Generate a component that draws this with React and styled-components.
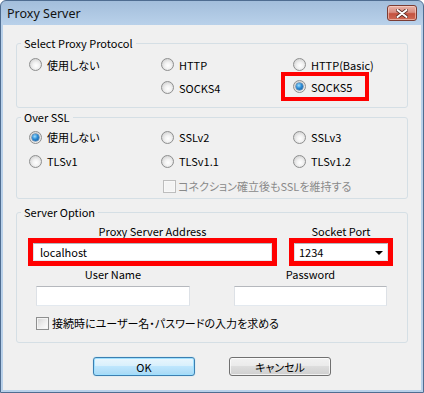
import React from "react";
import styled, { createGlobalStyle } from "styled-components";

const Global = createGlobalStyle`
  html, body { margin: 0; padding: 0; background: #ffffff; }
  body {
    font-family: "Noto Sans CJK JP", "Noto Sans", sans-serif;
    font-size: 11px;
    color: #000;
    font-feature-settings: "palt";
  }
  * { box-sizing: border-box; }
`;

const Window = styled.div`
  width: 424px;
  height: 393px;
  border: 1px solid #4f6d91;
  border-radius: 6px 6px 0 0;
  background: linear-gradient(#a3bedb 0px, #b9d1ea 24px, #b9d1ea 100%);
  padding: 0 2px 2px;
  display: flex;
  flex-direction: column;
`;

const TitleBar = styled.div`
  height: 24px;
  flex: none;
  display: flex;
  align-items: center;
  justify-content: space-between;
  padding: 0 4px 0 4px;
`;

const Title = styled.span`
  font-family: "Noto Sans", "Open Sans", sans-serif;
  font-size: 12.5px;
  color: #111;
  font-feature-settings: normal;
`;

const CloseButton = styled.div`
  width: 30px;
  height: 16px;
  border: 1px solid #7b3c33;
  border-radius: 3px;
  background: linear-gradient(#e9b2a7 0%, #d98d80 45%, #c4523f 55%, #cf6a55 100%);
  box-shadow: inset 0 0 0 1px rgba(255, 220, 210, 0.55);
  display: flex;
  align-items: center;
  justify-content: center;
`;

const Client = styled.div`
  flex: 1;
  background: #f0f0f0;
  padding: 11px 13px 0 13px;
  display: flex;
  flex-direction: column;
`;

const Group = styled.fieldset`
  margin: ${(p) => p.$mt || 0}px 0 0;
  padding: ${(p) => p.$pad};
  border: 1px solid #d5dfe5;
  border-radius: 3px;
  min-width: 0;
`;

const Legend = styled.legend`
  margin-left: 4px;
  padding: 0 3px;
  line-height: 14px;
  height: 14px;
`;

const OptionGrid = styled.div`
  display: grid;
  grid-template-columns: repeat(3, 132px);
  grid-auto-rows: ${(p) => p.$row}px;
  padding-left: 12px;
`;

const Option = styled.label`
  display: flex;
  align-items: center;
  gap: ${(p) => p.$gap ?? 5}px;
  white-space: nowrap;
  grid-column: ${(p) => p.$col || "auto"};
  margin-top: ${(p) => p.$mt || 0}px;
  margin-left: ${(p) => p.$ml || 0}px;
  color: ${(p) => (p.$disabled ? "#8a8a8a" : "#000")};
`;

const RadioDot = styled.span`
  position: relative;
  flex: none;
  width: 13px;
  height: 13px;
  border-radius: 50%;
  border: 1px solid #8e8f8f;
  background: radial-gradient(circle at 55% 60%, #ffffff 0%, #f2f2f2 35%, #d6d6d6 75%, #c9c9c9 100%);
  &::after {
    content: "";
    display: ${(p) => (p.$checked ? "block" : "none")};
    position: absolute;
    left: 2px;
    top: 2px;
    width: 7px;
    height: 7px;
    border-radius: 50%;
    background: radial-gradient(circle at 40% 35%, #9fe0ff 0%, #2b8ad4 45%, #0d4f8f 100%);
    box-shadow: 0 0 0 0.5px #2f5f8c;
  }
`;

const CheckBox = styled.span`
  flex: none;
  width: 13px;
  height: 13px;
  border: 1px solid ${(p) => (p.$disabled ? "#bdbdbd" : "#8e8f8f")};
  background: ${(p) =>
    p.$disabled
      ? "#f4f4f4"
      : "linear-gradient(135deg, #d2d2d2 0%, #ececec 50%, #ffffff 100%)"};
  box-shadow: inset 0 0 0 1px ${(p) => (p.$disabled ? "#f8f8f8" : "#f4f4f4")};
`;

const Highlight = styled.div`
  width: ${(p) => p.$w}px;
  height: ${(p) => p.$h}px;
  margin: -4px 0 -2px -12px;
  border: 4px solid #ff0000;
  padding-left: 8px;
  display: flex;
  align-items: center;
`;

const FieldRow = styled.div`
  display: flex;
  gap: ${(p) => p.$gap}px;
  padding-left: ${(p) => p.$pl}px;
  margin-top: ${(p) => p.$mt || 0}px;
`;

const Field = styled.div`
  width: ${(p) => p.$w}px;
  display: flex;
  flex-direction: column;
  align-items: stretch;
`;

const FieldLabel = styled.div`
  text-align: center;
  line-height: 13px;
  height: 13px;
  margin-bottom: ${(p) => p.$mb || 0}px;
  white-space: nowrap;
`;

const RedFrame = styled.div`
  height: 28px;
  border: 5px solid #ff0000;
  display: flex;
`;

const TextBox = styled.div`
  flex: 1 1 auto;
  height: ${(p) => p.$h || 18}px;
  background: #fff;
  border: 1px solid;
  border-color: #b5b8bd #dde1e6 #e3e9ef #dde1e6;
  padding-left: ${(p) => p.$pl || 4}px;
  padding-right: 4px;
  display: flex;
  align-items: center;
  justify-content: space-between;
  line-height: 14px;
`;

const Arrow = styled.span`
  width: 0;
  height: 0;
  border-left: 4px solid transparent;
  border-right: 4px solid transparent;
  border-top: 4px solid #000;
  margin-top: 1px;
`;

const CheckRow = styled.label`
  display: flex;
  align-items: center;
  gap: 3px;
  height: 14px;
  margin-top: 10px;
  padding-left: 19px;
  white-space: nowrap;
`;

const ButtonRow = styled.div`
  display: flex;
  justify-content: center;
  gap: 34px;
  margin-top: 14px;
`;

const Button = styled.div`
  width: 102px;
  height: 19px;
  border-radius: 3px;
  border: 1px solid ${(p) => (p.$default ? "#3c7fb1" : "#707070")};
  background: ${(p) =>
    p.$default
      ? "linear-gradient(#eaf6fd 0%, #d9f0fc 45%, #bee6fd 50%, #a7d9f5 100%)"
      : "linear-gradient(#f2f2f2 0%, #ebebeb 45%, #dddddd 50%, #cfcfcf 100%)"};
  box-shadow: ${(p) =>
    p.$default
      ? "inset 0 0 0 1px #9ee0ff, 0 0 1px #6cc6f0"
      : "inset 0 0 0 1px rgba(255,255,255,0.7)"};
  display: flex;
  align-items: center;
  justify-content: center;
  line-height: 14px;
`;

function Radio({ label, checked, col, mt }) {
  return (
    <Option $col={col} $mt={mt}>
      <RadioDot $checked={checked} />
      {label}
    </Option>
  );
}

export default function App() {
  return (
    <>
      <Global />
      <Window>
        <TitleBar>
          <Title>Proxy Server</Title>
          <CloseButton>
            <svg width="12" height="9" viewBox="0 0 12 9">
              <path d="M1.5 1 L10.5 8 M10.5 1 L1.5 8" stroke="#5a2a22" strokeWidth="3.6" strokeLinecap="round" fill="none" />
              <path d="M1.5 1 L10.5 8 M10.5 1 L1.5 8" stroke="#ffffff" strokeWidth="2" strokeLinecap="round" fill="none" />
            </svg>
          </CloseButton>
        </TitleBar>
        <Client>
          <Group $pad="3px 0 8px">
            <Legend>Select Proxy Protocol</Legend>
            <OptionGrid $row={23}>
              <Radio label="使用しない" />
              <Radio label="HTTP" />
              <Radio label="HTTP(Basic)" />
              <Radio label="SOCKS4" col="2" />
              <Highlight $w={88} $h={29}>
                <Radio label="SOCKS5" checked />
              </Highlight>
            </OptionGrid>
          </Group>

          <Group $mt={2} $pad="1px 0 1px">
            <Legend>Over SSL</Legend>
            <OptionGrid $row={24}>
              <Radio label="使用しない" checked />
              <Radio label="SSLv2" />
              <Radio label="SSLv3" />
              <Radio label="TLSv1" />
              <Radio label="TLSv1.1" />
              <Radio label="TLSv1.2" />
              <Option $col="2 / span 2" $mt={2} $ml={2} $gap={2} $disabled>
                <CheckBox $disabled />
                コネクション確立後もSSLを維持する
              </Option>
            </OptionGrid>
          </Group>

          <Group $mt={6} $pad="6px 0 12px">
            <Legend>Server Option</Legend>
            <FieldRow $gap={12} $pl={11}>
              <Field $w={249}>
                <FieldLabel>Proxy Server Address</FieldLabel>
                <RedFrame>
                  <TextBox $pl={6}>localhost</TextBox>
                </RedFrame>
              </Field>
              <Field $w={104}>
                <FieldLabel>Socket Port</FieldLabel>
                <RedFrame>
                  <TextBox $pl={4}>
                    1234
                    <Arrow />
                  </TextBox>
                </RedFrame>
              </Field>
            </FieldRow>
            <FieldRow $gap={44} $pl={19} $mt={2}>
              <Field $w={154}>
                <FieldLabel $mb={5}>User Name</FieldLabel>
                <TextBox $h={20} />
              </Field>
              <Field $w={153}>
                <FieldLabel $mb={5}>Password</FieldLabel>
                <TextBox $h={20} />
              </Field>
            </FieldRow>
            <CheckRow>
              <CheckBox />
              接続時にユーザー名・パスワードの入力を求める
            </CheckRow>
          </Group>

          <ButtonRow>
            <Button $default>OK</Button>
            <Button>キャンセル</Button>
          </ButtonRow>
        </Client>
      </Window>
    </>
  );
}
